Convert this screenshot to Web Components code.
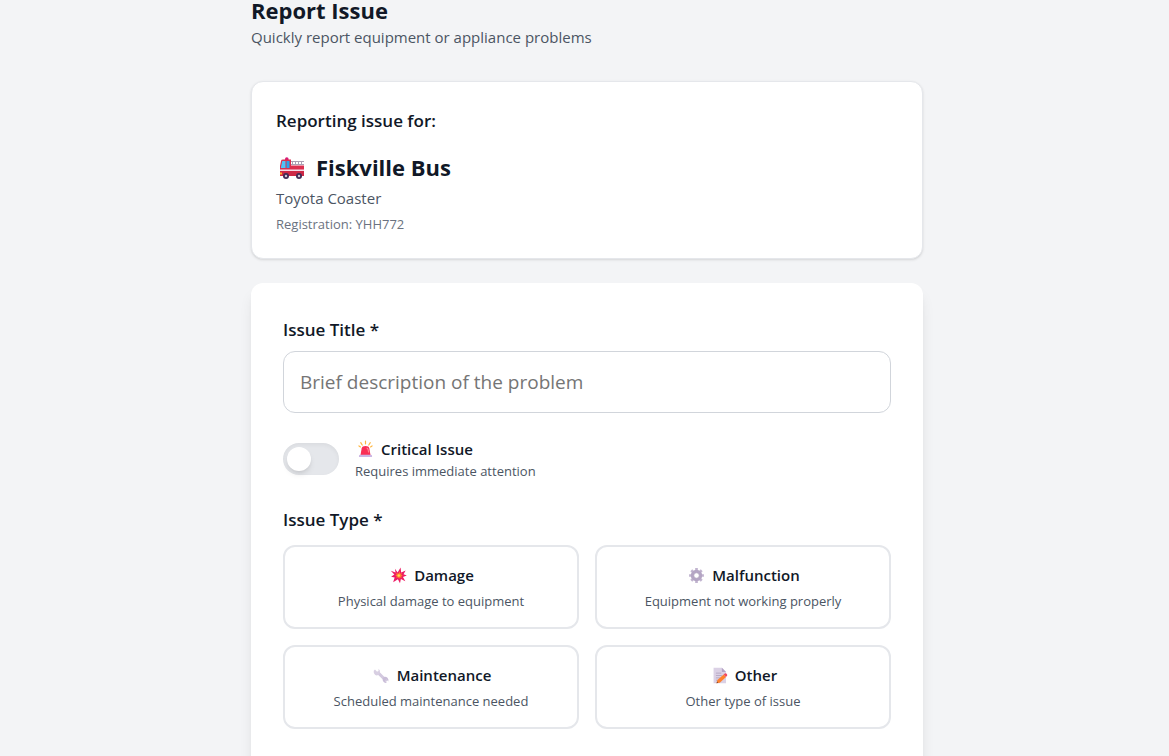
<!DOCTYPE html>
<html lang="en">
<head>
<meta charset="utf-8">
<meta name="viewport" content="width=device-width, initial-scale=1">
<title>Report Issue</title>
<style>
  body {
    margin: 0;
    background: #f3f4f6;
    color: #111827;
    font-family: "Open Sans", "Noto Sans", sans-serif;
    font-size: 15px;
    line-height: 24px;
  }
</style>
</head>
<body>
<report-page></report-page>

<template id="report-page">
  <style>
    :host { display: block; padding: 0 16px 0 21px; }
    main { max-width: 672px; margin: 0 auto; }
    header { margin-bottom: 32px; }
    h1 { margin: 0; font-size: 22px; line-height: 20px; font-weight: 700; }
    header p { margin: 0; padding-top: 5px; color: #4b5563; }
    form { display: grid; gap: 24px; background: #fff; border-radius: 12px; padding: 32px 32px 64px;
      box-shadow: 0 10px 15px -3px rgb(0 0 0 / .1), 0 4px 6px -4px rgb(0 0 0 / .1); }
    equipment-card { margin-bottom: 24px; }
    fieldset { border: 0; margin: 0; padding: 0; min-width: 0; }
    legend { padding: 0; margin-bottom: 10px; font-size: 17px; line-height: 30px; font-weight: 600; }
    .options { display: grid; grid-template-columns: repeat(2, minmax(0, 1fr)); gap: 16px; }
  </style>
  <main>
    <header>
      <h1>Report Issue</h1>
      <p>Quickly report equipment or appliance problems</p>
    </header>
    <equipment-card>
      <span slot="name">Fiskville Bus</span>
      <span slot="model">Toyota Coaster</span>
      <span slot="registration">Registration: YHH772</span>
    </equipment-card>
    <form>
      <text-field label="Issue Title *" placeholder="Brief description of the problem"></text-field>
      <toggle-row><span slot="title">Critical Issue</span><span slot="hint">Requires immediate attention</span></toggle-row>
      <fieldset>
        <legend>Issue Type *</legend>
        <div class="options">
          <issue-option icon="damage">Damage<span slot="hint">Physical damage to equipment</span></issue-option>
          <issue-option icon="gear">Malfunction<span slot="hint">Equipment not working properly</span></issue-option>
          <issue-option icon="wrench">Maintenance<span slot="hint">Scheduled maintenance needed</span></issue-option>
          <issue-option icon="memo">Other<span slot="hint">Other type of issue</span></issue-option>
        </div>
      </fieldset>
    </form>
  </main>
</template>

<template id="equipment-card">
  <style>
    :host { display: block; background: #fff; border: 1px solid #e5e7eb; border-radius: 12px; padding: 24px;
      box-shadow: 0 1px 3px rgb(0 0 0 / .1), 0 1px 2px -1px rgb(0 0 0 / .1); }
    h2 { margin: 0 0 15px; font-size: 17px; line-height: 30px; font-weight: 600; }
    .name { display: flex; align-items: center; gap: 8px; font-size: 22px; line-height: 32px; font-weight: 700; }
    .model { color: #4b5563; margin-top: 3px; }
    .registration { color: #6b7280; font-size: 13px; line-height: 20px; margin-top: 4px; }
    emoji-icon { --size: 32px; }
  </style>
  <h2>Reporting issue for:</h2>
  <div class="name"><emoji-icon name="engine"></emoji-icon><slot name="name"></slot></div>
  <div class="model"><slot name="model"></slot></div>
  <div class="registration"><slot name="registration"></slot></div>
</template>

<template id="text-field">
  <style>
    :host { display: block; }
    label { display: block; margin-bottom: 6px; font-size: 17px; line-height: 30px; font-weight: 600; }
    input { display: block; box-sizing: border-box; width: 100%; height: 62px; margin: 0; padding: 16px;
      border: 1px solid #d1d5db; border-radius: 12px; background: #fff; color: inherit;
      font: 19px/28px "Open Sans", "Noto Sans", sans-serif; outline: 0; }
    input::placeholder { color: #757575; opacity: 1; }
    input:focus { border-color: #3b82f6; }
  </style>
  <label for="field"></label>
  <input id="field" type="text">
</template>

<template id="toggle-row">
  <style>
    :host { display: block; }
    label { display: flex; align-items: center; gap: 16px; cursor: pointer; }
    input { appearance: none; flex: none; display: flex; align-items: center; box-sizing: border-box;
      width: 56px; height: 32px; margin: 0; padding: 4px; border-radius: 16px; background: #e5e7eb;
      box-shadow: inset 0 2px 4px rgb(0 0 0 / .05); cursor: pointer; }
    input::before { content: ""; width: 24px; height: 24px; border-radius: 50%; background: #fff;
      box-shadow: 0 4px 6px -1px rgb(0 0 0 / .1), 0 2px 4px -2px rgb(0 0 0 / .1); }
    input:checked { background: #dc2626; justify-content: flex-end; }
    .title { display: flex; align-items: center; gap: 5px; font-weight: 600; }
    .hint { display: block; color: #4b5563; font-size: 13px; line-height: 20px; }
    emoji-icon { --size: 19px; padding: 0 1px; }
  </style>
  <label>
    <input type="checkbox" role="switch">
    <span>
      <span class="title"><emoji-icon name="siren"></emoji-icon><slot name="title"></slot></span>
      <span class="hint"><slot name="hint"></slot></span>
    </span>
  </label>
</template>

<template id="issue-option">
  <style>
    :host { display: block; }
    button { display: block; width: 100%; margin: 0; padding: 16px; border: 2px solid #e5e7eb; border-radius: 12px;
      background: #fff; color: inherit; font: inherit; text-align: center; cursor: pointer; }
    button:hover { border-color: #d1d5db; }
    .title { display: flex; justify-content: center; align-items: center; gap: 5px; font-weight: 600; }
    .hint { display: block; margin-top: 4px; color: #4b5563; font-size: 13px; line-height: 20px; }
    emoji-icon { --size: 19px; padding: 0 1px; }
  </style>
  <button type="button">
    <span class="title"><emoji-icon></emoji-icon><span><slot></slot></span></span>
    <span class="hint"><slot name="hint"></slot></span>
  </button>
</template>

<script>
  const icons = {
    engine: `
      <path d="M9 8a1.800 1.800 0 0 1 3.600 0v1H9z" fill="#d81b78"/>
      <path d="M5 10q.2-1.400 2-1.400h8V24H4v-9z" fill="#dc2f4f"/>
      <path d="M6.200 10h3.300v7H4.800z" fill="#4fc3f7"/><path d="M10.500 10h3v7h-3z" fill="#29a5ea"/>
      <path d="M14.500 14.500H28V24H14.500z" fill="#dc2f4f"/>
      <path d="M15 10.500H28M15 13.500H28M16.500 10.500v3M19.500 10.500v3M22.500 10.500v3M25.500 10.500v3" stroke="#aaa0b4" stroke-width="1" fill="none"/>
      <path d="M4 18.500h24V20H4z" fill="#f5dce8"/><path d="M4 20h24v5H4z" fill="#ce2846"/>
      <path d="M4 21.500h2v2H4z" fill="#ffb02e"/>
      <circle cx="10" cy="25" r="3" fill="#402a54"/><circle cx="10" cy="25" r="1.200" fill="#cdc4d6"/>
      <circle cx="23" cy="25" r="3" fill="#402a54"/><circle cx="23" cy="25" r="1.200" fill="#cdc4d6"/>`,
    siren: `
      <path d="M16 2v4.500M8 4.500l2.500 4M24 4.500l-2.500 4M5 10l2.500 1.600M27 10l-2.500 1.600" stroke="#ffb640" stroke-width="2" stroke-linecap="round"/>
      <path d="M7.500 25.500L9.600 14Q10.400 10 16 10t6.400 4l2.100 11.500z" fill="#f92f55"/>
      <path d="M18 13.500q2 .5 2.500 3l.7 4.500" stroke="#ff8a93" stroke-width="1.800" fill="none"/>
      <path d="M7 25h18a2 2 0 0 1 2 2v1.500H5V27a2 2 0 0 1 2-2z" fill="#cbb5e3"/>`,
    damage: `
      <path d="M14.500 11L19.500 2.500l1 8.500 7.500-3.500-3.500 6.500 5.500 2-6.500 2.500 4 7-7.500-3.500L18.500 29l-3.500-6.500L7 27.500l2.500-8L3.500 18l5.500-3.500L3 8l8 3-1-6.500z" fill="#ed1b64"/>
      <path d="M16 12.500l2-3.500.8 4 3-1.200-1.500 3.200 3 1.200-3 1.300 1.200 2.800-3.300-1.500-1 3-2-3-3 1.500 1.200-3-3-1 2.700-1.500-2-2.800 3 .8z" fill="#ff822d"/>
      <circle cx="16.500" cy="16" r="2" fill="#ffe04d"/>`,
    gear: `
      <path d="M16 3.500v25M3.500 16h25M7.200 7.200l17.600 17.600M24.800 7.200L7.200 24.800" stroke="#c2b5d0" stroke-width="4.500"/>
      <circle cx="16" cy="16" r="7.200" fill="none" stroke="#b4a5c4" stroke-width="4.800"/>
      <circle cx="16" cy="16" r="4.500" fill="#fff" stroke="#a395b3" stroke-width="1"/>`,
    wrench: `
      <path d="M10.500 11.500L23 24" stroke="#d3c9df" stroke-width="5" stroke-linecap="round"/>
      <path d="M5 6l4 4 2-1V4.500A6.500 6.500 0 0 1 8 16 6.500 6.500 0 0 1 3 8z" fill="#d8cfe2"/>
      <path d="M20 18.500a6 6 0 0 1 7.500 7.500l-3.500-3.500-2.500 2.500 3.500 3.500a6 6 0 0 1-7-7z" fill="#c9bdd8"/>`,
    memo: `
      <path d="M6 3h14l7 7v19H6z" fill="#dbd1e5"/><path d="M20 3l7 7h-7z" fill="#b4a4c5"/>
      <path d="M10 12h9M10 16h10M10 20h7M10 24h4" stroke="#b0a2bf" stroke-width="1.400"/>
      <path d="M11 29l1.500-5.500L23 14.500l4 4L16.500 28z" fill="#ff822d"/>
      <path d="M23 14.500l2-2q1.500-1 3 .5t.8 3L27 18.500z" fill="#f3485f"/><path d="M11 29l.8-2.800 2 2z" fill="#6d4534"/>`
  };

  class TemplateElement extends HTMLElement {
    constructor() {
      super();
      this.attachShadow({ mode: "open" }).append(
        document.getElementById(this.localName).content.cloneNode(true));
    }
  }

  customElements.define("emoji-icon", class extends HTMLElement {
    static observedAttributes = ["name"];
    constructor() { super(); this.attachShadow({ mode: "open" }); }
    attributeChangedCallback() {
      this.shadowRoot.innerHTML = `
        <style>:host { display: block; flex: none; } svg { display: block; width: var(--size); height: var(--size); }</style>
        <svg viewBox="0 0 32 32" fill="none" aria-hidden="true">${icons[this.getAttribute("name")]}</svg>`;
    }
  });
  customElements.define("equipment-card", class extends TemplateElement {});
  customElements.define("text-field", class extends TemplateElement {
    connectedCallback() {
      this.shadowRoot.querySelector("label").textContent = this.getAttribute("label");
      this.shadowRoot.querySelector("input").placeholder = this.getAttribute("placeholder");
    }
  });
  customElements.define("toggle-row", class extends TemplateElement {});
  customElements.define("issue-option", class extends TemplateElement {
    connectedCallback() {
      this.shadowRoot.querySelector("emoji-icon").setAttribute("name", this.getAttribute("icon"));
    }
  });
  customElements.define("report-page", class extends TemplateElement {});
</script>
</body>
</html>
